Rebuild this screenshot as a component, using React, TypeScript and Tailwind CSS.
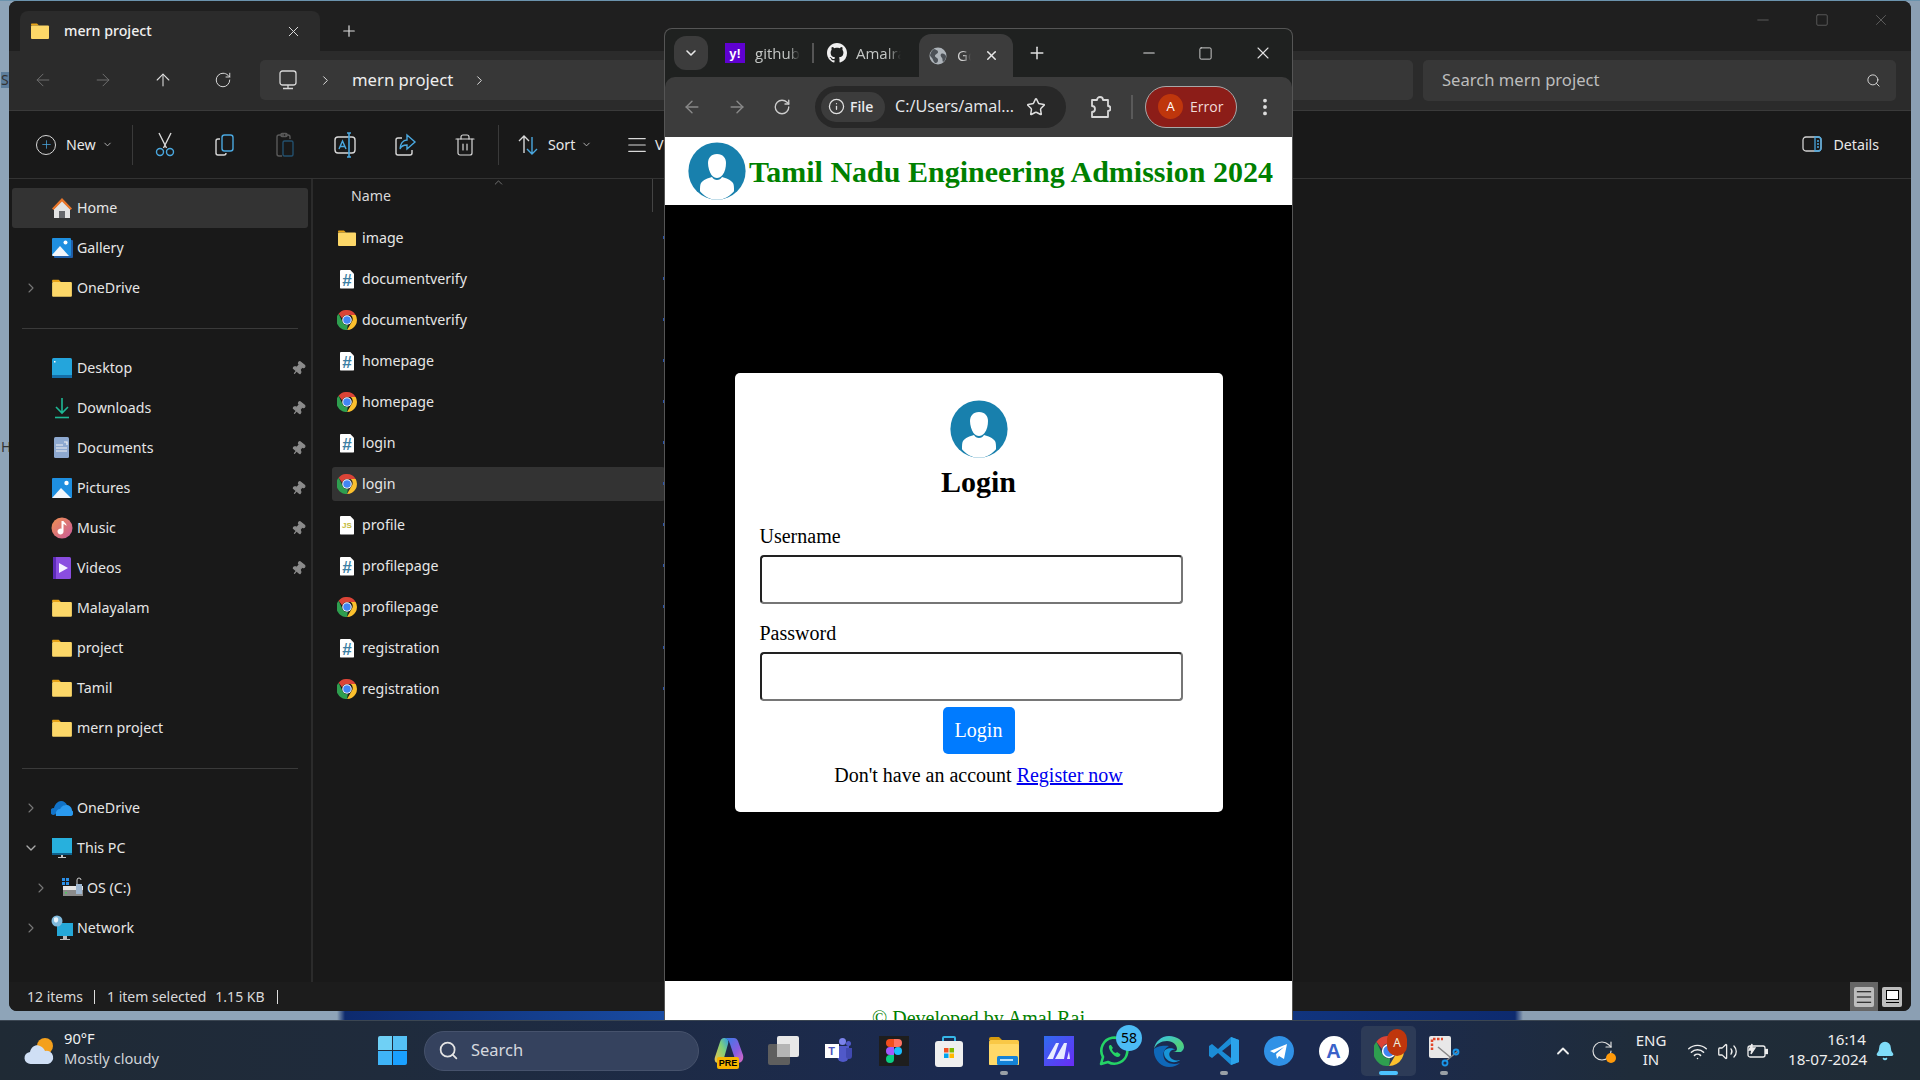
import React from "react";
import {
  ArrowLeft, ArrowRight, ArrowUp, RotateCw, ChevronRight, ChevronDown, ChevronUp, X, Plus, Search, Pin, Star, Info,
  Minus, Square, EllipsisVertical, Wifi, Volume2, Bell, AlignJustify, Trash2,
} from "lucide-react";

const Folder = ({ s = 20 }: { s?: number }) => (
  <svg width={s} height={s} viewBox="0 0 20 20">
    <path d="M1 3.5C1 3 1.4 2.5 2 2.5h5l2 2h-8z" fill="#e8a317" />
    <rect x="1" y="4.5" width="18" height="13.5" rx="1" fill="#fcd768" />
  </svg>
);

const ChromeIcon = ({ s = 20 }: { s?: number }) => (
  <svg width={s} height={s} viewBox="4 4 40 40">
    <path d="M24 4a20 20 0 0 1 17.3 10H24a10 10 0 0 0-9.5 7L7.2 11.5A20 20 0 0 1 24 4z" fill="#db4437" />
    <path d="M41.3 14A20 20 0 0 1 24 44l9-15.5a10 10 0 0 0-1.5-14.5z" fill="#fbc02d" />
    <path d="M24 44A20 20 0 0 1 7.2 11.5L15.5 29a10 10 0 0 0 10 5L24 44z" fill="#2e9e4f" />
    <circle cx="24" cy="24" r="9.5" fill="#fff" />
    <circle cx="24" cy="24" r="7.5" fill="#4285f4" />
  </svg>
);

const PageIcon = ({ mark, color, size }: { mark: string; color: string; size: string }) => (
  <div className="w-[14px] h-[19px] bg-white flex items-center justify-center overflow-hidden rounded-[1px] [clip-path:polygon(0_0,70%_0,100%_22%,100%_100%,0_100%)]">
    <span className={`${size} ${color} font-bold leading-none mt-[2px] [font-family:'Liberation_Sans',sans-serif]`}>{mark}</span>
  </div>
);

const Avatar = ({ s }: { s: number }) => (
  <svg width={s} height={s} viewBox="0 0 58 58">
    <defs>
      <clipPath id="av"><circle cx="29" cy="29" r="28.6" /></clipPath>
    </defs>
    <circle cx="29" cy="29" r="28.6" fill="#1880ad" />
    <g clipPath="url(#av)">
      <path d="M29 12c6 0 9 4 9 9 0 4-1 9-3.5 12-1.5 2-3.5 3-5.5 3s-4-1-5.5-3C21.500 30 20 25 20 21c0-5 3-9 9-9z" fill="#fff" />
      <path d="M24 35c1 2 3 3 5 3s4-1 5-3c4 1 9 3 11 6 1 2 1 4 1 8 0 1-8 9-17 9s-17-8-17-9c0-4 0-6 1-8 2-3 7-5 11-6z" fill="#fff" />
    </g>
  </svg>
);

const Scissors = () => (
  <svg width="22" height="26" viewBox="0 0 22 26" fill="none" strokeWidth="1.4">
    <path d="M5 1l7.500 15M17 1L9.500 16" stroke="#d8d8d8" />
    <circle cx="6" cy="20" r="3.500" stroke="#4aa8e0" />
    <circle cx="16" cy="20" r="3.500" stroke="#4aa8e0" />
  </svg>
);
const CopyIcon = () => (
  <svg width="22" height="24" viewBox="0 0 22 24" fill="none" strokeWidth="1.4">
    <path d="M6 6H4a2 2 0 0 0-2 2v12a2 2 0 0 0 2 2h6a2 2 0 0 0 2-2" stroke="#d8d8d8" />
    <rect x="8" y="2" width="11" height="16" rx="2.500" stroke="#4aa8e0" />
  </svg>
);
const PasteIcon = () => (
  <svg width="22" height="26" viewBox="0 0 22 26" fill="none" strokeWidth="1.4">
    <path d="M10 3H5a2 2 0 0 0-2 2v17a2 2 0 0 0 2 2h3M11 3h3a2 2 0 0 1 2 2v2" stroke="#5a5a5a" />
    <rect x="7" y="1.500" width="6" height="3" rx="1" stroke="#5a5a5a" />
    <rect x="9" y="9" width="10" height="15" rx="1.500" stroke="#23506e" />
  </svg>
);
const RenameIcon = () => (
  <svg width="24" height="26" viewBox="0 0 24 26" fill="none" strokeWidth="1.4">
    <rect x="2" y="5" width="20" height="16" rx="3" stroke="#d8d8d8" />
    <path d="M6 17l3.500-8 3.500 8M7 14.500h5" stroke="#4aa8e0" />
    <path d="M16 1v24M14 1h4M14 25h4" stroke="#4aa8e0" strokeWidth="1.600" />
  </svg>
);
const ShareIcon = () => (
  <svg width="24" height="24" viewBox="0 0 24 24" fill="none" strokeWidth="1.4">
    <path d="M9 5H5a2 2 0 0 0-2 2v13a2 2 0 0 0 2 2h12a2 2 0 0 0 2-2v-3" stroke="#d8d8d8" />
    <path d="M14 2l8 7-8 7v-4c-3 0-6 1-7 4 0-5 3-9 7-9z" stroke="#4aa8e0" />
  </svg>
);
const SortIcon = () => (
  <svg width="24" height="24" viewBox="0 0 24 24" fill="none" strokeWidth="1.4">
    <path d="M8 20V3M3 8l5-5 5 5" stroke="#d8d8d8" />
    <path d="M16 4v17M11 16l5 5 5-5" stroke="#4aa8e0" />
  </svg>
);
const DetailsIcon = () => (
  <svg width="20" height="16" viewBox="0 0 20 16" fill="none" strokeWidth="1.3">
    <rect x="1" y="1" width="18" height="14" rx="3" stroke="#d0d0d0" />
    <path d="M13 1h3a3 3 0 0 1 3 3v8a3 3 0 0 1-3 3h-3z" stroke="#4aa8e0" />
    <path d="M15 5h2M15 8h2M15 11h2" stroke="#4aa8e0" />
  </svg>
);
const MonitorIcon = () => (
  <svg width="20" height="20" viewBox="0 0 20 20" fill="none" stroke="#d6d6d6" strokeWidth="1.3">
    <rect x="2" y="1" width="16" height="14" rx="2.500" />
    <path d="M10 15v3M5 18.500h10" />
  </svg>
);

const Home = () => (
  <svg width="22" height="22" viewBox="0 0 22 22">
    <path d="M11 3L3 12v9h16v-9z" fill="#e3e3e3" />
    <path d="M11 1L1 11.500l1.500 1.500L11 4.500l8.500 8.500 1.500-1.500z" fill="#e8752a" />
    <rect x="8" y="14" width="6" height="7" fill="#66686c" />
  </svg>
);
const Gallery = () => (
  <svg width="22" height="22" viewBox="0 0 22 22">
    <rect x="3" y="3" width="19" height="18" rx="1" fill="#1f5da8" />
    <rect x="1" y="1" width="19" height="18" rx="1" fill="#1e8fe0" />
    <path d="M1 18l8-9 9 10H2z" fill="#f2f6fb" />
    <circle cx="14.500" cy="5.500" r="2" fill="#fff" />
  </svg>
);
const Desktop = () => (
  <svg width="22" height="22" viewBox="0 0 22 22">
    <rect x="1" y="1" width="20" height="20" rx="1.500" fill="#24a5dc" />
    <rect x="1" y="18" width="20" height="3" fill="#146ea8" />
    <rect x="3" y="4" width="1.500" height="1.500" fill="#fff" />
  </svg>
);
const Downloads = () => (
  <svg width="22" height="22" viewBox="0 0 22 22" fill="none" stroke="#1eb794" strokeWidth="1.600">
    <path d="M11 1v15M5 10l6 6 6-6" />
    <path d="M4 20.500h14" />
  </svg>
);
const Documents = () => (
  <svg width="22" height="22" viewBox="0 0 22 22">
    <rect x="3" y="0" width="15" height="21" rx="1.500" fill="#8ea9d0" />
    <path d="M5 8h7M5 11h11M5 14h11M13 5h3v3" stroke="#f2f2f2" strokeWidth="1.200" fill="none" />
  </svg>
);
const Pictures = () => (
  <svg width="22" height="22" viewBox="0 0 22 22">
    <rect x="1" y="1" width="20" height="20" rx="1" fill="#1e8fe0" />
    <path d="M1 21l9-10 10 10z" fill="#f2f6fb" />
    <circle cx="15.500" cy="6" r="2.200" fill="#fff" />
  </svg>
);
const Music = () => (
  <svg width="22" height="22" viewBox="0 0 22 22">
    <defs>
      <linearGradient id="mus" x1="0" y1="0" x2="1" y2="1"><stop offset="0" stopColor="#f19150" /><stop offset="1" stopColor="#c85a9c" /></linearGradient>
    </defs>
    <circle cx="11" cy="11" r="10.500" fill="url(#mus)" />
    <path d="M10.500 4h2v10.500a3 3 0 1 1-2-2.800zM12.500 4c1 2 3 2 3 5-1-1-2-2-3-2z" fill="#fff" />
  </svg>
);
const Videos = () => (
  <svg width="22" height="24" viewBox="0 0 22 24">
    <rect x="2" y="1" width="18" height="22" rx="1.500" fill="#8a4de0" />
    <rect x="2" y="1" width="3" height="22" fill="#5e2cb8" />
    <path d="M8 7l9 5-9 5z" fill="#f5f0ff" />
  </svg>
);
const OneDriveCloud = () => (
  <svg width="22" height="18" viewBox="0 0 22 18">
    <path d="M3 16a3 3 0 0 1 0-7c1-4 4-7 7-7 3 0 5 2 6 4-3 0-6 2-7 5z" fill="#1173c9" />
    <path d="M5 17h14a3 3 0 0 0 2-5.500C21 8 18 6 15 6c-3 0-5 2-6 4-3 0-5 3-4 7z" fill="#2a9af0" />
  </svg>
);
const ThisPC = () => (
  <svg width="22" height="22" viewBox="0 0 22 22">
    <rect x="1" y="1" width="20" height="15" fill="#27b0dd" />
    <rect x="1" y="16" width="20" height="2" fill="#105f8a" />
    <path d="M10 18h2v2h3v1H7v-1h3z" fill="#c8c8c8" />
  </svg>
);
const OSDrive = () => (
  <svg width="22" height="22" viewBox="0 0 22 22">
    <rect x="1" y="1" width="3" height="3" fill="#2a8fe8" /><rect x="5" y="1" width="3" height="3" fill="#2a8fe8" />
    <rect x="1" y="5" width="3" height="3" fill="#2a8fe8" /><rect x="5" y="5" width="3" height="3" fill="#2a8fe8" />
    <rect x="2" y="9" width="20" height="4" fill="#e4e4e4" />
    <rect x="2" y="13" width="20" height="6" fill="#8b8b8b" />
    <rect x="4" y="15" width="2" height="1.500" fill="#4ccb5c" />
    <rect x="15" y="7" width="6" height="10" fill="#9fb7d0" />
    <path d="M16 7V3a2 2 0 0 1 4 0" stroke="#cfcfcf" fill="none" />
  </svg>
);
const Network = () => (
  <svg width="22" height="26" viewBox="0 0 22 26">
    <rect x="6" y="8" width="16" height="13" fill="#25a8d8" />
    <path d="M12 21h4v3h3v1H9v-1h3z" fill="#bbb" />
    <circle cx="6" cy="6" r="5.500" fill="#7fb9dc" />
    <path d="M3 3c3-2 5 0 4 3-1 2-3 2-4 0z" fill="#e8f3fa" />
  </svg>
);

type NavProps = { icon?: React.ReactNode; label: string; chev?: "r" | "d"; pin?: boolean; indent?: boolean; active?: boolean };
const NavRow = ({ icon, label, chev, pin, indent, active }: NavProps) => (
  <div className={`flex items-center h-10 rounded-[3px] ${indent ? "pl-[21px]" : "pl-[11px]"} ${active ? "bg-[#333333]" : ""}`}>
    <div className="w-4 flex justify-center text-[#777]">
      {chev === "r" && <ChevronRight size={16} strokeWidth={1.6} />}
      {chev === "d" && <ChevronDown size={16} strokeWidth={2} className="text-[#aaa]" />}
    </div>
    <div className="ml-[12px] w-[22px] h-[26px] flex items-center justify-center shrink-0">{icon}</div>
    <span className="ml-[4px] text-[14.2px] text-[#e6e6e6]">{label}</span>
    {pin && <Pin size={15} className="ml-auto mr-[2px] text-[#8a8a8a] fill-[#8a8a8a] rotate-[40deg]" />}
  </div>
);

const Sep = () => (
  <div className="h-10 flex items-center px-[10px]"><div className="h-px w-[277px] bg-[#3a3a3a]" /></div>
);

const css = <PageIcon mark="#" color="text-[#3d7fa3]" size="text-[17px]" />;
const js = <PageIcon mark="JS" color="text-[#c3b93a]" size="text-[8px]" />;
const chrome = <ChromeIcon s={20} />;
const files: { i: React.ReactNode; n: string; sel?: boolean }[] = [
  { i: <Folder s={20} />, n: "image" },
  { i: css, n: "documentverify" },
  { i: chrome, n: "documentverify" },
  { i: css, n: "homepage" },
  { i: chrome, n: "homepage" },
  { i: css, n: "login" },
  { i: chrome, n: "login", sel: true },
  { i: js, n: "profile" },
  { i: css, n: "profilepage" },
  { i: chrome, n: "profilepage" },
  { i: css, n: "registration" },
  { i: chrome, n: "registration" },
];

const Explorer = () => (
  <div className="absolute left-[9px] top-[1px] w-[1902px] h-[1010px] rounded-[8px] overflow-hidden flex flex-col bg-[#191919] text-[#e8e8e8]">
    {/* title row */}
    <div className="h-[50px] bg-[#1f1f1f] flex items-end pl-[11px] shrink-0">
      <div className="w-[300px] h-[40px] bg-[#2b2b2b] rounded-t-[8px] flex items-center pl-[10px]">
        <Folder s={20} />
        <span className="ml-[14px] text-[14.2px] font-medium text-[#f0f0f0]">mern project</span>
        <X size={17} strokeWidth={1.4} className="ml-auto mr-[18px] text-[#ddd]" />
      </div>
      <div className="h-[40px] flex items-center ml-[20px]"><Plus size={18} strokeWidth={1.6} className="text-[#ddd]" /></div>
      <div className="h-[50px] ml-auto flex items-start pt-[10px] pr-[21px] gap-[43px] text-[#6f6f6f]">
        <Minus size={18} strokeWidth={1} />
        <Square size={14} strokeWidth={1.2} className="mt-[2px]" />
        <X size={18} strokeWidth={1} />
      </div>
    </div>
    {/* address row */}
    <div className="h-[60px] bg-[#2b2b2b] border-b border-[#3a3a3a] flex items-center shrink-0 pb-px">
      <ArrowLeft size={20} strokeWidth={1.2} className="ml-[24px] text-[#6e6e6e]" />
      <ArrowRight size={20} strokeWidth={1.2} className="ml-[40px] text-[#6e6e6e]" />
      <ArrowUp size={20} strokeWidth={1.3} className="ml-[40px] text-[#dcdcdc]" />
      <RotateCw size={18} strokeWidth={1.3} className="ml-[41px] text-[#dcdcdc]" />
      <div className="ml-[28px] w-[1153px] h-[40px] rounded-[5px] bg-[#373737] flex items-center pl-[18px]">
        <MonitorIcon />
        <ChevronRight size={15} strokeWidth={1.6} className="ml-[20px] text-[#ddd]" />
        <span className="ml-[19px] text-[16.7px] text-[#eee]">mern project</span>
        <ChevronRight size={15} strokeWidth={1.6} className="ml-[19px] text-[#ddd]" />
      </div>
      <div className="ml-[10px] w-[473px] h-[41px] rounded-[5px] bg-[#373737] flex items-center pl-[19px] pr-[15px] text-[#bdbdbd]">
        <span className="text-[16.6px]">Search mern project</span>
        <Search size={15} strokeWidth={1.5} className="ml-auto text-[#ddd]" />
      </div>
    </div>
    {/* toolbar */}
    <div className="h-[68px] bg-[#191919] border-b border-[#333] flex items-center shrink-0 pr-[32px]">
      <div className="ml-[27px] w-[20px] h-[20px] rounded-full border border-[#d8d8d8] flex items-center justify-center">
        <Plus size={13} strokeWidth={1.4} className="text-[#4aa8e0]" />
      </div>
      <span className="ml-[10px] text-[14.2px] w-[30px]">New</span>
      <ChevronDown size={11} className="ml-[6px] text-[#bbb]" />
      <div className="ml-[19px] w-px h-[40px] bg-[#3a3a3a]" />
      <div className="ml-[21px]"><Scissors /></div>
      <div className="ml-[38px]"><CopyIcon /></div>
      <div className="ml-[38px]"><PasteIcon /></div>
      <div className="ml-[37px]"><RenameIcon /></div>
      <div className="ml-[36px]"><ShareIcon /></div>
      <Trash2 size={24} strokeWidth={1.2} className="ml-[36px] text-[#d8d8d8]" />
      <div className="ml-[21px] w-px h-[40px] bg-[#3a3a3a]" />
      <div className="ml-[17px]"><SortIcon /></div>
      <span className="ml-[8px] text-[14.2px] w-[28px]">Sort</span>
      <ChevronDown size={11} className="ml-[5px] text-[#bbb]" />
      <AlignJustify size={22} strokeWidth={1.2} className="ml-[34px] text-[#d8d8d8]" />
      <span className="ml-[7px] text-[14.2px]">View</span>
      <div className="ml-auto flex items-center">
        <DetailsIcon />
        <span className="ml-[11px] text-[14.2px]">Details</span>
      </div>
    </div>
    {/* content */}
    <div className="flex-1 flex min-h-0">
      <div className="w-[302px] px-[3px] pt-[9px] shrink-0">
        <NavRow active icon={<Home />} label="Home" />
        <NavRow icon={<Gallery />} label="Gallery" />
        <NavRow icon={<Folder s={22} />} label="OneDrive" chev="r" />
        <Sep />
        <NavRow icon={<Desktop />} label="Desktop" pin />
        <NavRow icon={<Downloads />} label="Downloads" pin />
        <NavRow icon={<Documents />} label="Documents" pin />
        <NavRow icon={<Pictures />} label="Pictures" pin />
        <NavRow icon={<Music />} label="Music" pin />
        <NavRow icon={<Videos />} label="Videos" pin />
        <NavRow icon={<Folder s={22} />} label="Malayalam" />
        <NavRow icon={<Folder s={22} />} label="project" />
        <NavRow icon={<Folder s={22} />} label="Tamil" />
        <NavRow icon={<Folder s={22} />} label="mern project" />
        <Sep />
        <NavRow icon={<OneDriveCloud />} label="OneDrive" chev="r" />
        <NavRow icon={<ThisPC />} label="This PC" chev="d" />
        <NavRow icon={<OSDrive />} label="OS (C:)" chev="r" indent />
        <NavRow icon={<Network />} label="Network" chev="r" />
      </div>
      <div className="w-[2px] bg-[#2b2b2b] shrink-0" />
      <div className="w-[352px] shrink-0">
        <div className="relative h-[33px] flex items-center pl-[38px] w-[340px] border-r border-[#444]">
          <span className="text-[14.2px] text-[#d8d8d8]">Name</span>
          <ChevronUp size={13} strokeWidth={1} className="absolute left-[179px] -top-[3px] text-[#bbb]" />
        </div>
        <div className="pt-[9px]">
          {files.map((f, idx) => (
            <div key={idx} className={`relative h-[34px] mb-[7px] pl-[3px] ml-[19px] rounded-[3px] flex items-center ${f.sel ? "bg-[#333333]" : ""}`}>
              <div className="w-[24px] flex justify-center">{f.i}</div>
              <span className="ml-[3px] text-[14.2px] text-[#e6e6e6]">{f.n}</span>
              <span className="absolute left-[331px] top-[15px] w-px h-[3px] bg-[#2a56b0]" />
            </div>
          ))}
        </div>
      </div>
    </div>
    {/* status */}
    <div className="h-[29px] bg-[#1c1c1c] flex items-center shrink-0 text-[14px] text-[#d8d8d8] relative">
      <span className="ml-[18px]">12 items</span>
      <div className="ml-[11px] w-px h-[14px] bg-[#ddd]" />
      <span className="ml-[12px]">1 item selected</span>
      <span className="ml-[9px]">1.15 KB</span>
      <div className="ml-[12px] w-px h-[14px] bg-[#ddd]" />
      <div className="ml-auto mr-[9px] flex items-center h-[29px] gap-[4px]">
        <div className="w-[28px] h-[29px] bg-[#666] flex items-center justify-center">
          <div className="w-[20px] h-[20px] bg-[#bdbdbd] rounded-[2px] flex items-center justify-center">
            <AlignJustify size={18} strokeWidth={1.3} className="text-black" />
          </div>
        </div>
        <div className="w-[20px] h-[20px] bg-[#bdbdbd] rounded-[2px] flex flex-col items-center justify-center">
          <div className="w-[13px] h-[10px] bg-white border border-black" />
          <div className="w-[13px] h-px bg-black mt-[2px]" />
        </div>
      </div>
    </div>
  </div>
);

const YahooIcon = () => (
  <div className="w-5 h-5 bg-[#5f01d1] flex items-center justify-center text-white font-bold text-[13px] leading-none shrink-0 [font-family:'Liberation_Sans',sans-serif]">y!</div>
);
const GithubMark = () => (
  <svg width="20" height="20" viewBox="0 0 16 16" fill="#f0f0f0" className="shrink-0">
    <path d="M8 0C3.58 0 0 3.58 0 8c0 3.54 2.29 6.53 5.47 7.590.4.070.55-.170.55-.380 0-.190-.010-.820-.010-1.490-2.010.370-2.530-.490-2.690-.940-.090-.230-.480-.940-.820-1.130-.280-.150-.680-.520-.010-.530.630-.010 1.080.580 1.230.820.720 1.210 1.870.870 2.330.660.070-.520.280-.870.510-1.070-1.780-.200-3.640-.890-3.640-3.950 0-.870.310-1.590.820-2.150-.080-.200-.360-1.020.080-2.120 0 0 .670-.210 2.200.820.640-.180 1.320-.270 2-.270s1.360.090 2 .270c1.530-1.040 2.200-.820 2.200-.820.440 1.100.160 1.920.080 2.120.510.560.820 1.270.820 2.150 0 3.070-1.870 3.750-3.650 3.950.290.250.540.730.540 1.480 0 1.070-.010 1.930-.010 2.200 0 .210.150.460.550.380A8.010 8.010 0 0 0 16 8c0-4.420-3.580-8-8-8z" />
  </svg>
);
const Globe = () => (
  <svg width="18" height="18" viewBox="0 0 18 18" className="shrink-0">
    <circle cx="9" cy="9" r="8.500" fill="#aeb4ba" />
    <path d="M5 2c2 1 4 1 4 3S6 7 6 9s3 1 3 4-2 3-3 3c-2-2-2-4-3-5S1 9 1 8c1-3 2-5 4-6zM12 7c2-1 4 0 5 2 0 3-1 5-3 6-1-2 0-3-1-4s-2-3-1-4z" fill="#4c5157" />
  </svg>
);
const Puzzle = () => (
  <svg width="22" height="24" viewBox="0 0 22 24" fill="none" stroke="#d8d8d8" strokeWidth="1.800" strokeLinejoin="round">
    <path d="M3 5h5a3 3 0 0 1 6 0h5v6a2.500 2.500 0 0 1 0 5v6H3v-5a3 3 0 0 0 0-6z" />
  </svg>
);

const ChromeWin = () => (
  <div className="absolute left-[664px] top-[28px] w-[629px] h-[992px] rounded-t-[8px] border border-b-0 border-[#555] overflow-hidden flex flex-col bg-[#1f2120] [font-family:'Open_Sans',sans-serif]">
    <div className="h-[48px] flex items-center shrink-0">
      <div className="ml-[9px] w-[34px] h-[34px] rounded-[12px] bg-[#3c3c3c] flex items-center justify-center">
        <ChevronDown size={16} strokeWidth={2.4} className="text-[#e8e8e8]" />
      </div>
      <div className="ml-[17px]"><YahooIcon /></div>
      <span className="ml-[10px] w-[45px] overflow-hidden whitespace-nowrap text-[15px] text-[#c4c7c5] [mask-image:linear-gradient(90deg,#000_75%,transparent)]">github</span>
      <div className="ml-[12px] w-[2px] h-[20px] bg-[#555]" />
      <div className="ml-[13px]"><GithubMark /></div>
      <span className="ml-[9px] w-[45px] overflow-hidden whitespace-nowrap text-[15px] text-[#c4c7c5] [mask-image:linear-gradient(90deg,#000_70%,transparent)]">Amalraj</span>
      <div className="ml-[18px] w-[94px] h-[43px] self-end bg-[#3c3c3c] rounded-t-[12px] flex items-center pl-[10px]">
        <Globe />
        <span className="ml-[10px] w-[14px] overflow-hidden whitespace-nowrap text-[15px] text-[#d0d0d0] [mask-image:linear-gradient(90deg,#000_40%,transparent)]">Google</span>
        <X size={15} strokeWidth={2.4} className="ml-[13px] text-[#e8e8e8]" />
      </div>
      <Plus size={20} strokeWidth={1.8} className="ml-[14px] text-[#e0e0e0]" />
      <div className="ml-auto mr-[19px] flex items-center gap-[40px] text-[#e0e0e0]">
        <Minus size={18} strokeWidth={1.4} />
        <Square size={15} strokeWidth={1.4} />
        <X size={20} strokeWidth={1.3} />
      </div>
    </div>
    <div className="h-[60px] pb-px bg-[#3c3c3c] rounded-t-[10px] flex items-center shrink-0">
      <ArrowLeft size={20} strokeWidth={1.7} className="ml-[17px] text-[#888]" />
      <ArrowRight size={20} strokeWidth={1.7} className="ml-[25px] text-[#888]" />
      <RotateCw size={18} strokeWidth={1.8} className="ml-[26px] text-[#ccc]" />
      <div className="ml-[24px] w-[251px] h-[42px] rounded-full bg-[#282828] flex items-center pl-[6px]">
        <div className="w-[64px] h-[30px] rounded-full bg-[#3c3c3c] flex items-center pl-[7px]">
          <Info size={17} strokeWidth={1.8} className="text-[#e0e0e0]" />
          <span className="ml-[5px] text-[14px] font-semibold text-[#e8eaed]">File</span>
        </div>
        <span className="ml-[10px] text-[16.2px] text-[#e8eaed]">C:/Users/amal...</span>
        <Star size={20} strokeWidth={1.8} className="ml-auto mr-[20px] text-[#ddd]" />
      </div>
      <div className="ml-[23px]"><Puzzle /></div>
      <div className="ml-[20px] w-[2px] h-[24px] bg-[#5a5a5a]" />
      <div className="ml-[12px] w-[92px] h-[42px] rounded-full bg-[#8c1d18] border border-[#a8a8a8] flex items-center pl-[12px]">
        <div className="w-[25px] h-[25px] rounded-full bg-[#bf360c] flex items-center justify-center text-[13px] text-white">A</div>
        <span className="ml-[7px] text-[14px] text-[#f0dcd8]">Error</span>
      </div>
      <EllipsisVertical size={22} strokeWidth={2.2} className="ml-[17px] text-[#ddd]" />
    </div>
    <div className="flex-1 flex flex-col min-h-0 [font-family:'Liberation_Serif',serif]">
      <div className="h-[68px] bg-white flex items-center pl-[23px] shrink-0">
        <Avatar s={58} />
        <h1 className="ml-[3px] text-[30px] font-bold text-[#008000] whitespace-nowrap">Tamil Nadu Engineering Admission 2024</h1>
      </div>
      <div className="h-[776px] bg-black flex items-center justify-center shrink-0">
        <div className="w-[488px] h-[439px] mb-[2px] bg-white rounded-[5px] pl-[25px] pt-[27px]">
          <div className="w-[438px] flex justify-center"><Avatar s={58} /></div>
          <h2 className="w-[438px] h-[47px] flex items-center justify-center text-[30px] font-bold text-black">Login</h2>
          <label className="block mt-[20px] text-[20px] leading-[23px] text-black">Username</label>
          <input type="text" className="block mt-[7px] w-[423px] h-[49px] bg-white rounded-[4px] border-2 border-t-[#222] border-l-[#222] border-r-[#767676] border-b-[#767676]" />
          <label className="block mt-[18px] text-[20px] leading-[23px] text-black">Password</label>
          <input type="password" className="block mt-[7px] w-[423px] h-[49px] bg-white rounded-[4px] border-2 border-t-[#222] border-l-[#222] border-r-[#767676] border-b-[#767676]" />
          <div className="w-[438px] flex justify-center mt-[6px]">
            <button className="w-[72px] h-[47px] rounded-[5px] bg-[#007bff] text-white text-[20px]">Login</button>
          </div>
          <p className="w-[438px] mt-[10px] text-center text-[20px] leading-[23px] text-black">
            Don't have an account <a className="text-[#0000ee] underline">Register now</a>
          </p>
        </div>
      </div>
      <div className="flex-1 bg-white text-center text-[20px] text-[#008000] pt-[26px] leading-[23px]">© Developed by Amal Raj</div>
    </div>
  </div>
);

const TI = ({ children, active, dot }: { children: React.ReactNode; active?: boolean; dot?: "gray" | "blue" }) => (
  <div className={`relative w-[55px] h-[50px] flex items-center justify-center shrink-0 rounded-[5px] ${active ? "bg-[#2d3b57]" : ""}`}>
    {children}
    {dot === "gray" && <div className="absolute bottom-[1px] left-[24px] w-[8px] h-[4px] rounded-full bg-[#9aa0a6]" />}
    {dot === "blue" && <div className="absolute bottom-[1px] left-[18px] w-[19px] h-[4px] rounded-full bg-[#4cc2ff]" />}
  </div>
);

const Taskbar = () => (
  <div className="h-[60px] border-t border-[#3b4652] bg-[linear-gradient(90deg,#1f2a35_0%,#1f2b3c_20%,#1b2a50_50%,#1b2a50_70%,#1f2c3a_85%,#1f2b35_100%)] flex items-center relative text-white">
    {/* weather */}
    <svg width="32" height="30" viewBox="0 0 32 30" className="ml-[24px] shrink-0">
      <circle cx="21" cy="10" r="8" fill="#f4a01c" />
      <path d="M7 28a6 6 0 0 1-1-12c1-5 6-8 10-6 3 1 4 3 5 5a6.500 6.500 0 0 1 3 13z" fill="#cfdff5" />
    </svg>
    <div className="ml-[8px] mb-[5px] w-[100px] flex flex-col leading-[20px] text-[14.7px]">
      <span className="text-[#f2f2f2]">90°F</span>
      <span className="text-[#cfd3d8] whitespace-nowrap">Mostly cloudy</span>
    </div>
    {/* windows */}
    <div className="ml-[214px] w-[29px] h-[29px] grid grid-cols-2 grid-rows-2 gap-[1px] shrink-0">
      <div className="bg-[#6fd0f5] rounded-tl-[2px]" />
      <div className="bg-[#55c1f5]" />
      <div className="bg-[#3fb4f7]" />
      <div className="bg-[#1aa0ff] rounded-br-[2px]" />
    </div>
    <div className="ml-[17px] w-[275px] h-[40px] rounded-full bg-[#35425e] border border-[#46526c] flex items-center pl-[13px] shrink-0">
      <Search size={21} strokeWidth={2} className="text-[#e4e4e4]" />
      <span className="ml-[12px] text-[16.5px] text-[#d5d8de]">Search</span>
    </div>
    {/* apps */}
    <div className="ml-[2px] flex items-center">
      <TI>
        <svg width="30" height="30" viewBox="0 0 30 30">
          <defs>
            <linearGradient id="cpa" x1="0" y1="1" x2="1" y2="0"><stop offset="0" stopColor="#f2c14a" /><stop offset=".6" stopColor="#7ed07a" /><stop offset="1" stopColor="#2f9be8" /></linearGradient>
            <linearGradient id="cpb" x1="0" y1="0" x2="1" y2="1"><stop offset="0" stopColor="#2f7fe8" /><stop offset=".6" stopColor="#8a5ce0" /><stop offset="1" stopColor="#e06cc0" /></linearGradient>
          </defs>
          <path d="M10 2h10c2 0 3 1 4 3l5 14c1 4-1 8-5 8h-6c3-1 3-4 2-7L16 8c-1-3-3-6-6-6z" fill="url(#cpb)" />
          <path d="M10 2c3 0 5 2 4 6L10 22c-1 3-3 5-6 5-3 0-4-3-3-6L6 6c1-3 2-4 4-4z" fill="url(#cpa)" />
        </svg>
        <span className="absolute left-[16px] top-[31px] w-[22px] h-[12px] rounded-[2px] bg-[#f7b500] text-[9px] leading-[12px] font-bold text-black text-center [font-family:'Liberation_Sans',sans-serif]">PRE</span>
      </TI>
      <TI>
        <div className="relative w-[31px] h-[29px]">
          <div className="absolute left-0 top-[8px] w-[22px] h-[21px] rounded-[2px] bg-[#5e5e5e]" />
          <div className="absolute right-0 top-0 w-[22px] h-[21px] rounded-[2px] bg-[#e8e8e8]" />
          <div className="absolute left-[9px] top-[8px] w-[13px] h-[13px] bg-[#b5b5b5]" />
        </div>
      </TI>
      <TI>
        <div className="relative w-[28px] h-[28px]">
          <div className="absolute left-[14px] top-[1px] w-[7px] h-[7px] rounded-full bg-[#7b83eb]" />
          <div className="absolute left-[12px] top-[9px] w-[12px] h-[16px] rounded-b-[6px] bg-[#5059c9]" />
          <div className="absolute left-[21px] top-[4px] w-[5px] h-[5px] rounded-full bg-[#5059c9]" />
          <div className="absolute left-[21px] top-[11px] w-[6px] h-[11px] rounded-b-[3px] bg-[#4049b0]" />
          <div className="absolute left-0 top-[7px] w-[14px] h-[14px] bg-white text-[#4b53bc] text-[11px] leading-[14px] font-bold text-center [font-family:'Liberation_Sans',sans-serif]">T</div>
        </div>
      </TI>
      <TI>
        <div className="w-[30px] h-[30px] bg-[#1e1e1e] flex items-center justify-center">
          <svg width="16" height="24" viewBox="0 0 16 24">
            <path d="M0 4a4 4 0 0 1 4-4h4v8H4a4 4 0 0 1-4-4z" fill="#f24e1e" />
            <path d="M8 0h4a4 4 0 0 1 0 8H8z" fill="#ff7262" />
            <path d="M0 12a4 4 0 0 1 4-4h4v8H4a4 4 0 0 1-4-4z" fill="#a259ff" />
            <circle cx="12" cy="12" r="4" fill="#1abcfe" />
            <path d="M0 20a4 4 0 0 1 4-4h4v4a4 4 0 0 1-8 0z" fill="#0acf83" />
          </svg>
        </div>
      </TI>
      <TI>
        <svg width="30" height="32" viewBox="0 0 30 32">
          <path d="M9 6V3a1 1 0 0 1 1-1h10a1 1 0 0 1 1 1v3" stroke="#35b6e8" strokeWidth="2" fill="none" />
          <rect x="1" y="6" width="28" height="26" rx="3" fill="#efefef" />
          <rect x="10" y="13" width="4.500" height="4.500" fill="#f25022" />
          <rect x="15.500" y="13" width="4.500" height="4.500" fill="#7fba00" />
          <rect x="10" y="18.500" width="4.500" height="4.500" fill="#00a4ef" />
          <rect x="15.500" y="18.500" width="4.500" height="4.500" fill="#ffb900" />
        </svg>
      </TI>
      <TI dot="gray">
        <svg width="30" height="30" viewBox="0 0 30 30">
          <path d="M0 3a2 2 0 0 1 2-2h8l3 3h-13z" fill="#d69a0e" />
          <rect x="0" y="4" width="30" height="25" rx="1.500" fill="#f9c846" />
          <rect x="0" y="8" width="30" height="21" rx="1.500" fill="#ffd968" />
          <rect x="8" y="20" width="21" height="9" rx="1.500" fill="#1482d6" />
          <rect x="11" y="23" width="13" height="2" fill="#b7e0fa" />
        </svg>
      </TI>
      <TI>
        <div className="w-[30px] h-[30px] bg-[linear-gradient(135deg,#2f6cf0,#6a2cf5)] flex items-center justify-center">
          <svg width="24" height="16" viewBox="0 0 24 16"><path d="M0 16L9 0h3L6 16zM8 16L17 0h3L17 16zM20 16l2-8 1 8z" fill="#e8ecff" /></svg>
        </div>
      </TI>
      <TI>
        <svg width="32" height="32" viewBox="0 0 32 32" fill="none">
          <path d="M3 29l2-7a13 13 0 1 1 5 5z" stroke="#25d366" strokeWidth="2.600" strokeLinejoin="round" />
          <path d="M12 10c-2 1-1 4 1 7s5 5 7 5 3-3 2-3l-3-2-1 1c-2 0-4-3-4-4l1-1-2-3z" fill="#25d366" />
        </svg>
        <span className="absolute left-[30px] top-[-1px] w-[26px] h-[26px] rounded-full bg-[#4cbcf5] text-black text-[14px] leading-[26px] text-center">58</span>
      </TI>
      <TI>
        <svg width="30" height="32" viewBox="0 0 30 32">
          <defs>
            <linearGradient id="ed" x1="0" y1="0" x2="1" y2="1"><stop offset="0" stopColor="#35c1f1" /><stop offset=".7" stopColor="#52d17c" /><stop offset="1" stopColor="#36c7a5" /></linearGradient>
          </defs>
          <path d="M15 1C7 1 1 7 0 14c2-5 7-8 13-8 6 0 10 4 10 8 0 2-2 3-4 3h8c2-2 3-3 3-5C30 6 23 1 15 1z" fill="url(#ed)" />
          <path d="M0 14c-1 10 7 18 15 18 5 0 9-2 11-4-6 2-14 1-16-5-2-5 1-10 5-12C8 10 2 12 0 14z" fill="#0f68b8" />
          <path d="M10 18c0 6 6 10 12 9 3-1 4-2 4-2-4 1-8 0-10-3-1-2-1-4 0-5 1-2 4-3 6-2-4-3-12-2-12 3z" fill="#1896d8" />
        </svg>
      </TI>
      <TI dot="gray">
        <svg width="30" height="30" viewBox="0 0 30 30">
          <path d="M22 1l8 3v22l-8 3-13-12 -6 5-3-2V10l3-2 6 5z" fill="#1b8cd6" />
          <path d="M22 1v28l8-3V4z" fill="#2ba3ea" />
          <path d="M22 8l-9 7 9 7z" fill="#1f2a50" />
        </svg>
      </TI>
      <TI>
        <svg width="30" height="30" viewBox="0 0 30 30">
          <circle cx="15" cy="15" r="15" fill="#3091e6" />
          <path d="M6 15l17-7-3 15-5-3-2 3-1-5 8-7-10 6z" fill="#fff" />
        </svg>
      </TI>
      <TI>
        <div className="w-[30px] h-[30px] rounded-full bg-white flex items-center justify-center">
          <span className="text-[#3a62c9] font-bold text-[20px] leading-none [font-family:'Liberation_Sans',sans-serif]">A</span>
        </div>
      </TI>
      <TI active dot="blue">
        <ChromeIcon s={30} />
        <span className="absolute left-[26px] top-[3px] w-[20px] h-[27px] rounded-full bg-[#bf360c] text-[#eed] text-[12px] leading-[27px] text-center">A</span>
      </TI>
      <TI dot="gray">
        <svg width="32" height="32" viewBox="0 0 32 32">
          <rect x="1" y="1" width="22" height="22" rx="2" fill="#e8e8e8" />
          <path d="M4 15V4h11" stroke="#e2462a" strokeWidth="2.500" strokeDasharray="2.500 1.500" fill="none" />
          <path d="M10 12l12 10M30 16L18 26" stroke="#888" strokeWidth="1.500" />
          <circle cx="28" cy="17" r="2.500" stroke="#1a95e8" strokeWidth="1.800" fill="none" />
          <circle cx="17" cy="28" r="2.500" stroke="#1a95e8" strokeWidth="1.800" fill="none" />
        </svg>
      </TI>
    </div>
    {/* tray */}
    <div className="absolute right-[25px] top-0 h-[60px] flex items-center">
      <ChevronUp size={20} strokeWidth={2.2} className="text-[#eee]" />
      <div className="relative ml-[17px] w-[24px] h-[24px]">
        <RotateCw size={24} strokeWidth={1.2} className="text-[#ddd]" />
        <div className="absolute right-[-2px] bottom-[0px] w-[10px] h-[10px] rounded-full bg-[#ff9a0a]" />
      </div>
      <div className="ml-[22px] mb-[2px] w-[30px] flex flex-col items-center text-[15px] leading-[19px] text-[#eee]">
        <div>ENG</div>
        <div>IN</div>
      </div>
      <Wifi size={21} strokeWidth={1.7} className="ml-[21px] text-[#eee]" />
      <Volume2 size={21} strokeWidth={1.5} className="ml-[9px] text-[#eee]" />
      <svg width="21" height="16" viewBox="0 0 21 16" fill="none" stroke="#eee" strokeWidth="1.300" className="ml-[9px]">
        <rect x="1" y="3" width="17" height="11" rx="2" />
        <rect x="18.500" y="6.500" width="2" height="4" fill="#eee" />
        <path d="M5 1L2 7h3l-1 4 4-6H5z" fill="#eee" />
      </svg>
      <div className="ml-[20px] mb-[5px] w-[78px] text-right text-[15.2px] leading-[20px] text-[#eee]">
        <div>16:14</div>
        <div className="whitespace-nowrap">18-07-2024</div>
      </div>
      <Bell size={20} className="ml-[9px] text-[#7fdcf8] fill-[#7fdcf8]" />
    </div>
  </div>
);

export default function App() {
  return (
    <div className="w-[1920px] h-[1080px] overflow-hidden bg-black [font-family:'Noto_Sans',sans-serif]">
      <div className="relative h-[1020px] overflow-hidden bg-[linear-gradient(90deg,#8ea4b8_0,#8ea4b8_337px,#0d2a6e_345px,#1a4fa8_700px,#0d2a6e_1515px,#8b9fb3_1523px,#8b9fb3_100%)]">
        <div className="h-px bg-[#6b93ad]" />
        <span className="absolute left-[1px] top-[72px] text-[14px] leading-[16px] text-[#333] bg-[#5d7e9c]">S</span>
        <span className="absolute left-[1px] top-[439px] text-[14px] leading-[16px] text-[#333]">H</span>
        <Explorer />
        <ChromeWin />
      </div>
      <Taskbar />
    </div>
  );
}
